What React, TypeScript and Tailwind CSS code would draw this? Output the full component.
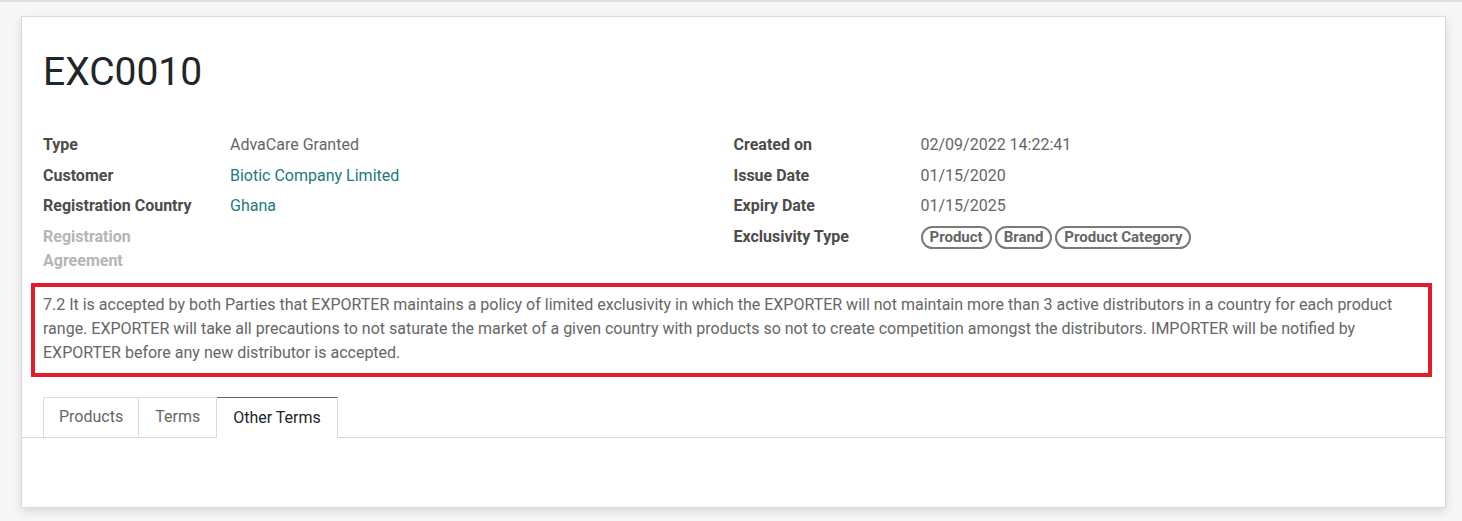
import React from "react";

const Row = ({ label, children, muted }: { label: React.ReactNode; children?: React.ReactNode; muted?: boolean }) => (
  <div className="flex py-[3px] leading-[24px] min-h-[30.5px]">
    <div className={`w-[187px] shrink-0 pr-4 font-bold ${muted ? "text-[#b5b5b5]" : "text-[#4c4c4c]"}`}>{label}</div>
    <div className="flex-1 text-[#666666]">{children}</div>
  </div>
);

const Badge = ({ children }: { children: React.ReactNode }) => (
  <span className="inline-flex items-center h-[23px] px-[7px] rounded-full border-2 border-[#7a7a7a] text-[15px] font-bold text-[#666666] leading-none">
    {children}
  </span>
);

export default function App() {
  return (
    <div
      className="w-[1462px] h-[521px] bg-[#f7f7f7] border-t-2 border-[#dedee8] overflow-hidden"
      style={{ fontFamily: "Roboto, 'Noto Sans', sans-serif" }}
    >
      <div className="ml-[21px] mt-[14px] w-[1425px] h-[492px] bg-white border border-[#d9d9d9] shadow-[0_4px_10px_rgba(0,0,0,0.12)]">
        <div className="px-[21px] pt-[31px]">
          <h1 className="text-[39px] leading-[48px] text-[#212529] font-normal">EXC0010</h1>
          <div className="grid grid-cols-2 mt-[34px] text-[16px]">
            <div>
              <Row label="Type">AdvaCare Granted</Row>
              <Row label="Customer">
                <span className="text-[#217a7c]">Biotic Company Limited</span>
              </Row>
              <Row label="Registration Country">
                <span className="text-[#217a7c]">Ghana</span>
              </Row>
              <Row label={<span className="block w-[120px]">Registration Agreement</span>} muted />
            </div>
            <div>
              <Row label="Created on">02/09/2022 14:22:41</Row>
              <Row label="Issue Date">01/15/2020</Row>
              <Row label="Expiry Date">01/15/2025</Row>
              <Row label="Exclusivity Type">
                <div className="flex gap-[3px] pt-px">
                  <Badge>Product</Badge>
                  <Badge>Brand</Badge>
                  <Badge>Product Category</Badge>
                </div>
              </Row>
            </div>
          </div>
          <div className="mt-[7px] ml-[-12px] mr-[-8px] border-4 border-[#e31b2b] pl-[8px] pr-[8px] pt-[6px] pb-[8px] text-[16px] leading-[24px] text-[#666666]">
            7.2 It is accepted by both Parties that EXPORTER maintains a policy of limited exclusivity in which the EXPORTER will not maintain more than 3 active distributors in a country for each product range. EXPORTER will take all precautions to not saturate the market of a given country with products so not to create competition amongst the distributors. IMPORTER will be notified by EXPORTER before any new distributor is accepted.
          </div>
        </div>
        <div className="mt-[20px] border-b border-[#d6d6d6] px-[21px] flex text-[16px]">
          <div className="h-[40px] px-[15px] flex items-center border border-b-0 border-[#dcdcdc] text-[#666666] -mb-px bg-white">Products</div>
          <div className="h-[40px] px-[16px] flex items-center border border-l-0 border-b-0 border-[#dcdcdc] text-[#666666] -mb-px bg-white">Terms</div>
          <div className="h-[41px] px-[16px] flex items-center border border-l-0 border-b-0 border-[#d6d6d6] border-t-[#4c6577] text-[#212529] -mb-px bg-white">Other Terms</div>
        </div>
      </div>
    </div>
  );
}
